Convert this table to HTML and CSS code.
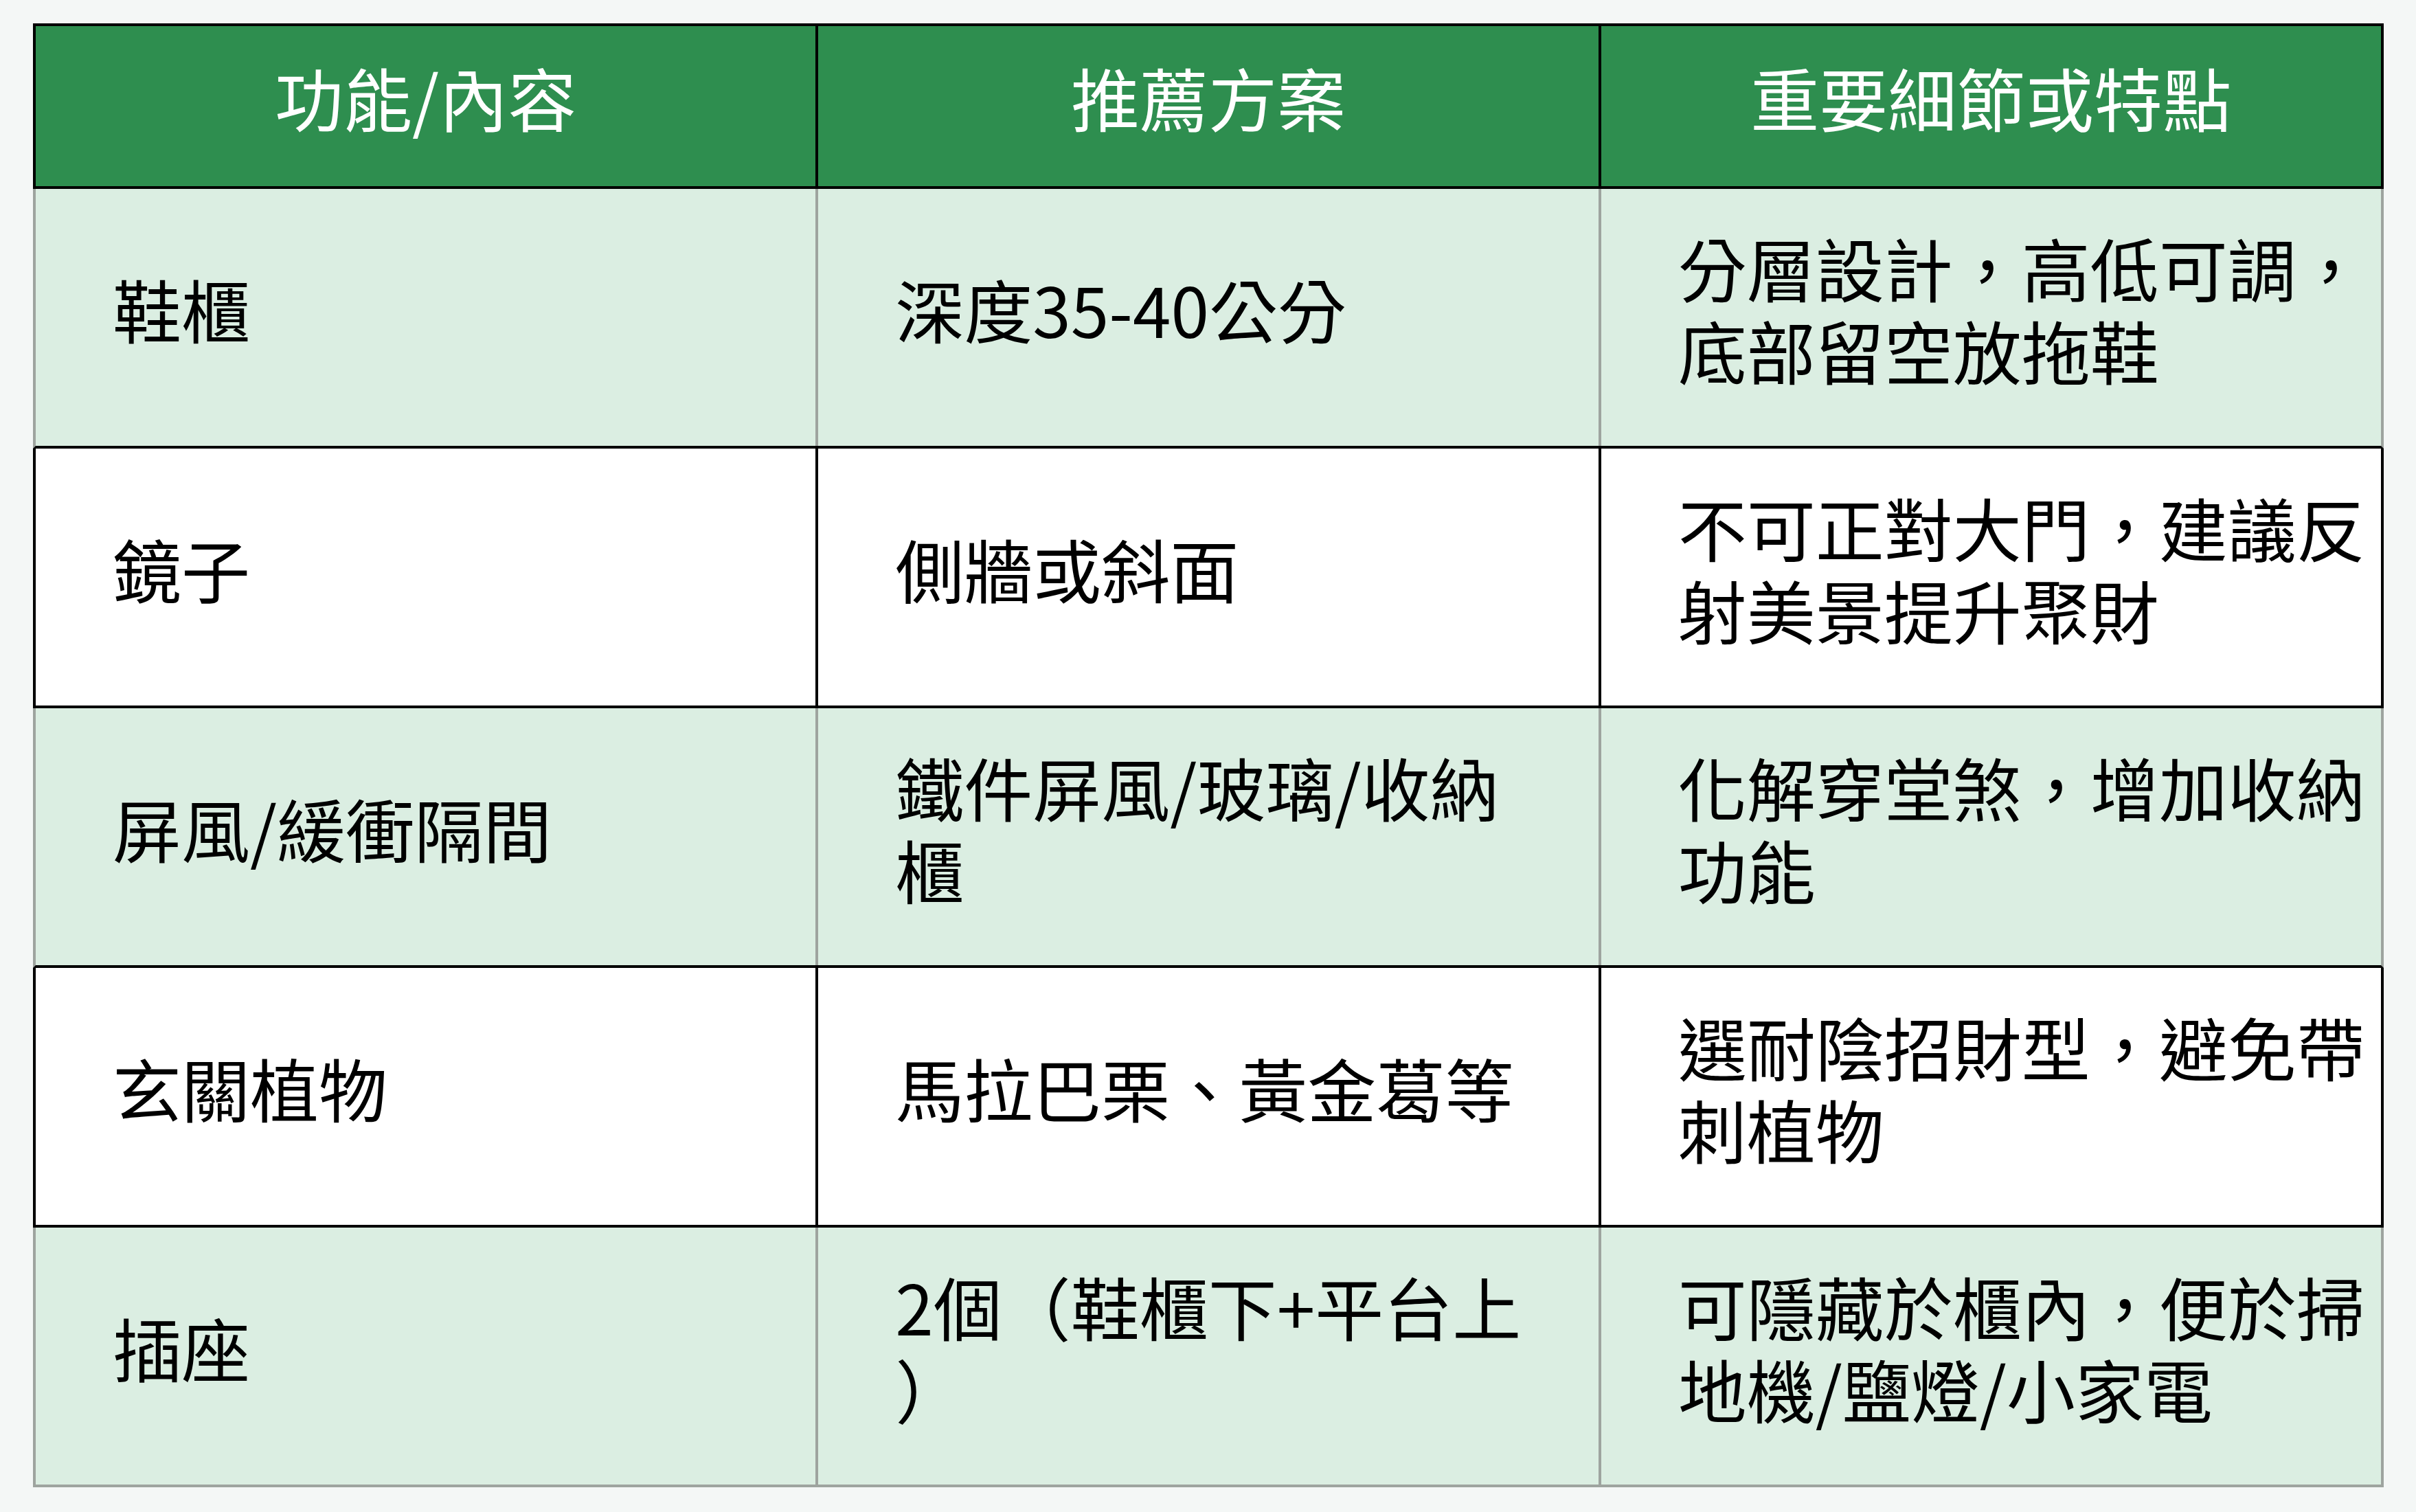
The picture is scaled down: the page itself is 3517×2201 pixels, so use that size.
FILE: index.html
```html
<!DOCTYPE html>
<html lang="zh-Hant">
<head>
<meta charset="utf-8">
<title>玄關規劃表</title>
<link rel="stylesheet" href="styles.css">
</head>
<body>
<div class="page">
  <div class="table">
    <div class="row head">
      <div class="cell">功能/內容</div>
      <div class="cell">推薦方案</div>
      <div class="cell">重要細節或特點</div>
    </div>
    <div class="row tint">
      <div class="cell">鞋櫃</div>
      <div class="cell">深度35-40公分</div>
      <div class="cell">分層設計，高低可調，底部留空放拖鞋</div>
    </div>
    <div class="row plain">
      <div class="cell">鏡子</div>
      <div class="cell">側牆或斜面</div>
      <div class="cell">不可正對大門，建議反射美景提升聚財</div>
    </div>
    <div class="row tint">
      <div class="cell">屏風/緩衝隔間</div>
      <div class="cell">鐵件屏風/玻璃/收納<br>櫃</div>
      <div class="cell">化解穿堂煞，增加收納功能</div>
    </div>
    <div class="row plain">
      <div class="cell">玄關植物</div>
      <div class="cell">馬拉巴栗、黃金葛等</div>
      <div class="cell">選耐陰招財型，避免帶刺植物</div>
    </div>
    <div class="row tint last">
      <div class="cell">插座</div>
      <div class="cell">2個（鞋櫃下+平台上<br>）</div>
      <div class="cell">可隱藏於櫃內，便於掃地機/鹽燈/小家電</div>
    </div>
  </div>
</div>
</body>
</html>
```

FILE: styles.css
```css
html, body {
  margin: 0;
  padding: 0;
  background: #f4f7f6;
}

body {
  font-family: "Noto Sans CJK TC", "Noto Sans CJK SC", sans-serif;
  color: #000;
}

.page {
  padding: 34px 47px 0 48px;
}

.table {
  display: flex;
  flex-direction: column;
}

.row {
  display: flex;
  box-sizing: border-box;
  height: 378px;
  border-style: solid;
  border-width: 0 4px 4px 4px;
}

.cell {
  flex: 1 1 0;
  min-width: 0;
  display: flex;
  align-items: center;
  box-sizing: border-box;
  padding: 0 12px 27px 112px;
  font-size: 100px;
  line-height: 120px;
  border-left: 0 solid;
  border-color: inherit;
}

.cell + .cell {
  border-left-width: 4px;
}

.head {
  height: 241px;
  border-width: 4px;
  border-color: #000;
  background: #2e8e4f;
  color: #fff;
}

.head .cell {
  justify-content: center;
  padding: 0 0 28px 0;
}

.tint {
  background: #dbeee2;
  border-color: #000 #9ea49f #000 #9ea49f;
}

.tint.last {
  border-bottom-color: #9ea49f;
}

.plain {
  background: #fff;
  border-color: #000;
}
```
